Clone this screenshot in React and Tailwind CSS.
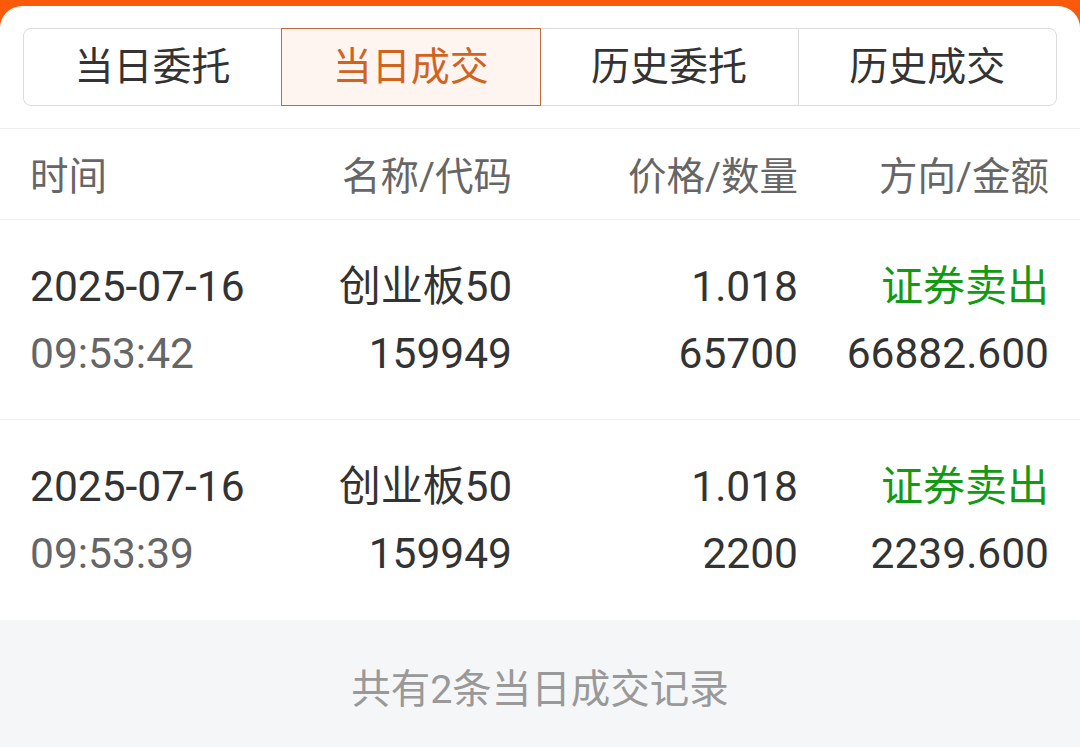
const rows = [
  { date: '2025-07-16', time: '09:53:42', name: '创业板50', code: '159949', price: '1.018', qty: '65700', side: '证券卖出', amount: '66882.600' },
  { date: '2025-07-16', time: '09:53:39', name: '创业板50', code: '159949', price: '1.018', qty: '2200', side: '证券卖出', amount: '2239.600' },
];

const tabs = ['当日委托', '当日成交', '历史委托', '历史成交'];

export default function App() {
  return (
    <div
      className="h-[747px] w-[1080px] overflow-hidden bg-[#fa5a0a] pt-[6px]"
      style={{ fontFamily: 'Roboto, "Noto Sans CJK SC", sans-serif' }}
    >
      <div className="flex h-full flex-col rounded-t-[22px] bg-white">
        {/* tabs */}
        <div className="px-[23px] pt-[22px] pb-[22px]">
          <div className="flex h-[78px] rounded-[8px] border border-[#dcdcdc]">
            {tabs.map((t, i) => (
              <div
                key={t}
                className={
                  i === 1
                    ? 'flex flex-1 items-center justify-center border border-[#c26a3e] bg-[#fff5f0] text-[39px] text-[#d2631f] -my-px'
                    : i === 3
                    ? 'flex flex-1 items-center justify-center border-l border-[#dcdcdc] text-[39px] text-[#333]'
                    : 'flex flex-1 items-center justify-center text-[39px] text-[#333]'
                }
              >
                {t}
              </div>
            ))}
          </div>
        </div>

        {/* header */}
        <div className="grid h-[92px] grid-cols-[230px_252px_286px_1fr] items-center border-t border-b border-[#f0f0f0] pt-[6px] pr-[31px] pl-[30px] text-[38.5px] text-[#666]">
          <div>时间</div>
          <div className="text-right">名称/代码</div>
          <div className="text-right">价格/数量</div>
          <div className="text-right">方向/金额</div>
        </div>

        {rows.map((r, i) => (
          <div
            key={i}
            className={`grid h-[200px] grid-cols-[230px_252px_286px_1fr] content-center gap-y-[14px] pr-[31px] pl-[30px] text-[42.5px] leading-[53px] text-[#333] ${i === 0 ? 'border-b border-[#f0f0f0]' : ''}`}
          >
            <div>{r.date}</div>
            <div className="text-right text-[42px]">{r.name}</div>
            <div className="text-right">{r.price}</div>
            <div className="text-right text-[42px] text-[#139a13]">{r.side}</div>
            <div className="text-[#666]">{r.time}</div>
            <div className="text-right">{r.code}</div>
            <div className="text-right">{r.qty}</div>
            <div className="text-right">{r.amount}</div>
          </div>
        ))}

        <div className="flex flex-1 items-center justify-center bg-[#f5f6f8] pt-[12px] text-[39.5px] text-[#999]">
          共有2条当日成交记录
        </div>
      </div>
    </div>
  );
}
